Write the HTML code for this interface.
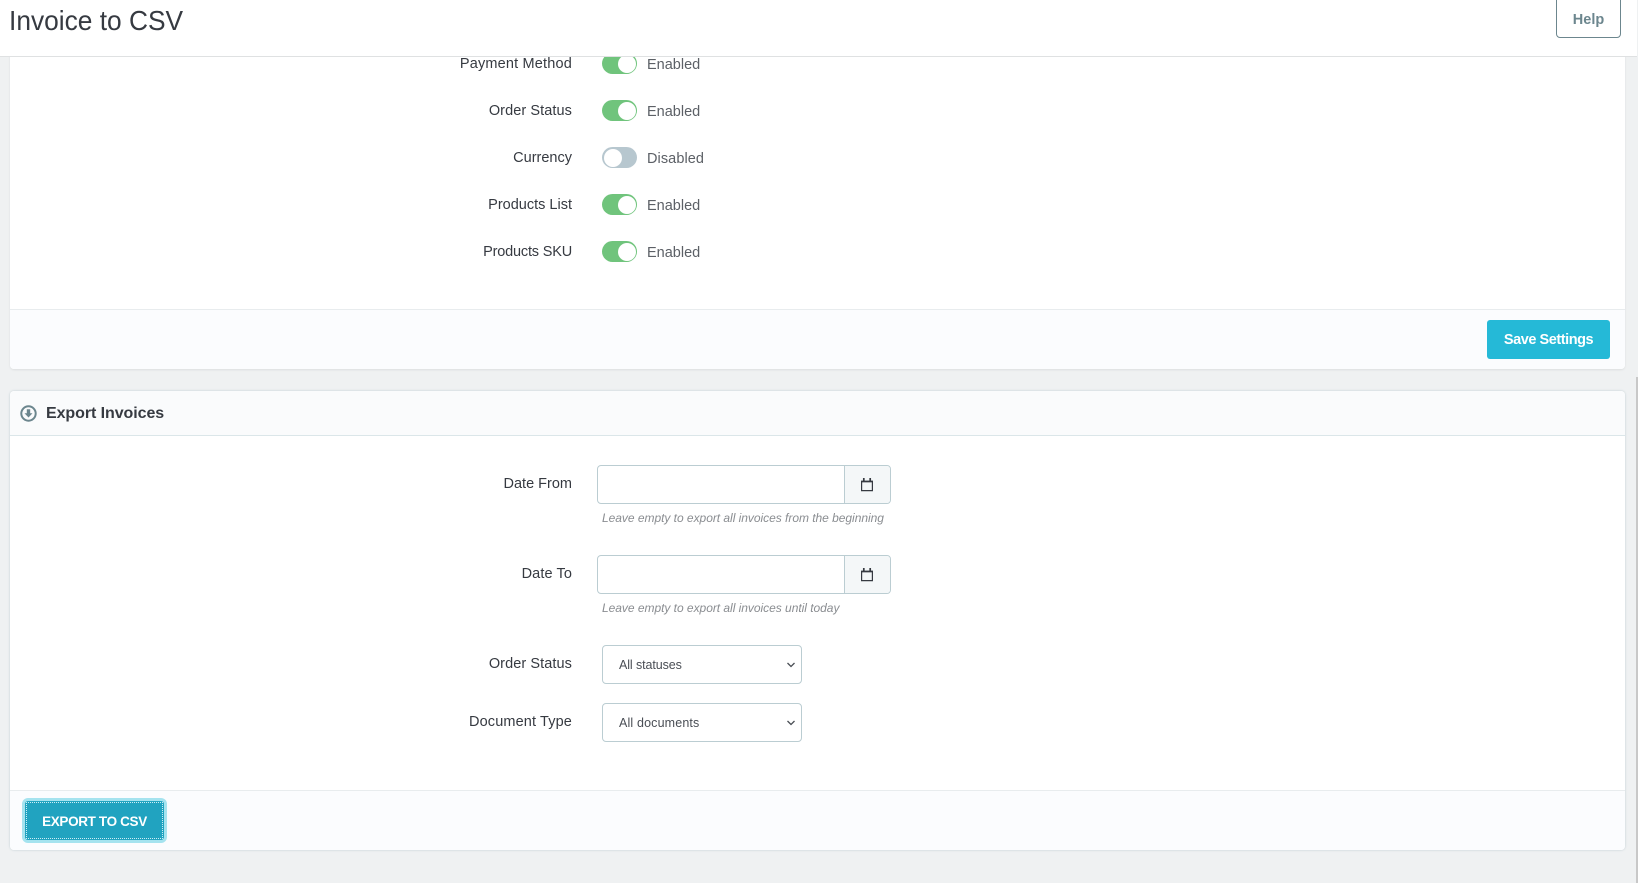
<!DOCTYPE html>
<html>
<head>
<meta charset="utf-8">
<title>Invoice to CSV</title>
<style>
html,body{margin:0;padding:0;width:1638px;height:883px;overflow:hidden;background:#eff1f2;}
body{font-family:"Liberation Sans",Arial,sans-serif;color:#363a41;position:relative;}
.a{position:absolute;white-space:nowrap;}
.panel{position:absolute;background:#fff;box-sizing:border-box;}
.lab{position:absolute;right:1066px;font-size:14.5px;line-height:20px;color:#363a41;white-space:nowrap;}
.st{position:absolute;left:647px;font-size:14.5px;line-height:20px;color:#5c6066;white-space:nowrap;}
.tg{position:absolute;left:602px;width:35px;height:21px;border-radius:11px;background:#70c47c;}
.tg:after{content:"";position:absolute;right:1.5px;top:1.5px;width:18px;height:18px;border-radius:50%;background:#fff;}
.tg.off{background:#b7c7cf;}
.tg.off:after{right:auto;left:1.5px;}
.inp{position:absolute;left:597px;width:294px;height:39px;box-sizing:border-box;border:1px solid #bbcdd2;border-radius:4px;background:#fff;}
.add{position:absolute;right:0;top:0;bottom:0;width:45px;background:#f4f7f8;border-left:1px solid #bbcdd2;border-radius:0 3px 3px 0;}
.add svg{position:absolute;left:15px;top:11px;}
.help{position:absolute;left:602px;font-size:12px;line-height:16px;font-style:italic;letter-spacing:-.03px;color:#8a8d91;white-space:nowrap;}
.sel{position:absolute;left:602px;width:200px;height:39px;box-sizing:border-box;border:1px solid #bbcdd2;border-radius:4px;background:#fff;font-size:12.5px;line-height:39px;padding-left:16px;letter-spacing:.15px;color:#4a4e55;}
.sel svg{position:absolute;right:5px;top:15px;}
</style>
</head>
<body>
<div class="panel" style="left:10px;top:40px;width:1615px;height:329px;border-radius:0 0 4px 4px;box-shadow:0 1px 2px rgba(0,0,0,.08);"></div>
<div class="a" style="left:10px;top:309px;width:1615px;height:60px;background:#fbfcfe;border-top:1px solid #e8ecee;box-sizing:border-box;border-radius:0 0 4px 4px;"></div>
<div class="lab" style="top:54px;letter-spacing:.18px;">Payment Method</div>
<div class="st" style="top:55px;">Enabled</div>
<div class="tg" style="top:53px;"></div>
<div class="lab" style="top:101px;letter-spacing:.08px;">Order Status</div>
<div class="st" style="top:102px;">Enabled</div>
<div class="tg" style="top:100px;"></div>
<div class="lab" style="top:148px;">Currency</div>
<div class="st" style="top:149px;letter-spacing:.08px;">Disabled</div>
<div class="tg off" style="top:147px;"></div>
<div class="lab" style="top:195px;">Products List</div>
<div class="st" style="top:196px;">Enabled</div>
<div class="tg" style="top:194px;"></div>
<div class="lab" style="top:242px;letter-spacing:-.18px;">Products SKU</div>
<div class="st" style="top:243px;">Enabled</div>
<div class="tg" style="top:241px;"></div>
<div class="a" style="left:1487px;top:320px;width:123px;height:39px;background:#25b9d7;border-radius:3px;color:#fff;font-size:14.5px;font-weight:bold;line-height:41px;letter-spacing:-.45px;text-align:center;">Save Settings</div>

<div class="panel" style="left:10px;top:391px;width:1615px;height:459px;border-radius:4px;box-shadow:0 0 2px rgba(120,150,160,.4);"></div>
<div class="a" style="left:10px;top:391px;width:1615px;height:45px;background:#fafbfc;border-bottom:1px solid #dbe6e9;box-sizing:border-box;border-radius:4px 4px 0 0;"></div>
<svg class="a" style="left:20px;top:405px;" width="17" height="17" viewBox="0 0 17 17"><circle cx="8.5" cy="8.5" r="7.2" fill="none" stroke="#6c868e" stroke-width="2"/><path d="M6.8 4.2h3.4v4h2.3l-4 4.3-4-4.3h2.3z" fill="#6c868e"/></svg>
<div class="a" style="left:46px;top:403px;font-size:16px;line-height:22px;font-weight:bold;letter-spacing:-.07px;color:#363a41;">Export Invoices</div>

<div class="lab" style="top:474px;">Date From</div>
<div class="inp" style="top:465px;"><div class="add"><svg width="14" height="15" viewBox="0 0 14 15"><path d="M1.6 4.6h10.8v9H1.6z" fill="none" stroke="#363a41" stroke-width="1.2"/><path d="M1 4.4h12" stroke="#363a41" stroke-width="1.6"/><path d="M3.8 1v3.4M10.2 1v3.4" stroke="#363a41" stroke-width="1.7"/></svg></div></div>
<div class="help" style="top:510px;">Leave empty to export all invoices from the beginning</div>
<div class="lab" style="top:564px;letter-spacing:.1px;">Date To</div>
<div class="inp" style="top:555px;"><div class="add"><svg width="14" height="15" viewBox="0 0 14 15"><path d="M1.6 4.6h10.8v9H1.6z" fill="none" stroke="#363a41" stroke-width="1.2"/><path d="M1 4.4h12" stroke="#363a41" stroke-width="1.6"/><path d="M3.8 1v3.4M10.2 1v3.4" stroke="#363a41" stroke-width="1.7"/></svg></div></div>
<div class="help" style="top:600px;">Leave empty to export all invoices until today</div>
<div class="lab" style="top:654px;letter-spacing:.08px;">Order Status</div>
<div class="sel" style="top:645px;letter-spacing:-.1px;">All statuses<svg width="10" height="8" viewBox="0 0 10 8"><path d="M1.5 2l3.5 3.5L8.5 2" fill="none" stroke="#4a4e55" stroke-width="1.3"/></svg></div>
<div class="lab" style="top:712px;letter-spacing:.13px;">Document Type</div>
<div class="sel" style="top:703px;">All documents<svg width="10" height="8" viewBox="0 0 10 8"><path d="M1.5 2l3.5 3.5L8.5 2" fill="none" stroke="#4a4e55" stroke-width="1.3"/></svg></div>

<div class="a" style="left:10px;top:790px;width:1615px;height:60px;background:#fbfcfe;border-top:1px solid #e8ecee;box-sizing:border-box;border-radius:0 0 4px 4px;"></div>
<div class="a" style="left:25px;top:801px;width:139px;height:39px;background:#21a3c0;border-radius:3px;box-shadow:0 0 0 3px #a5e3ef;color:#fff;font-size:13.5px;font-weight:bold;line-height:41px;letter-spacing:-.35px;text-align:center;">EXPORT TO CSV</div>
<div class="a" style="left:26px;top:802px;width:137px;height:37px;box-sizing:border-box;border:1px dotted #cfeef5;"></div>

<div class="a" style="left:1636px;top:377px;width:2px;height:506px;background:#c8c8c8;"></div>
<div class="a" style="left:0;top:0;width:1637px;height:57px;background:#fff;border-bottom:1px solid #dfe1e2;box-sizing:border-box;"></div>
<div class="a" style="left:9px;top:2px;font-size:28px;line-height:38px;color:#363a41;transform:scaleX(.94);transform-origin:0 0;">Invoice to CSV</div>
<div class="a" style="left:1556px;top:-4px;width:65px;height:42px;box-sizing:border-box;border:1px solid #6c868e;border-radius:4px;background:#fff;color:#6c868e;font-size:14.5px;font-weight:bold;line-height:46px;text-align:center;">Help</div>
</body>
</html>
